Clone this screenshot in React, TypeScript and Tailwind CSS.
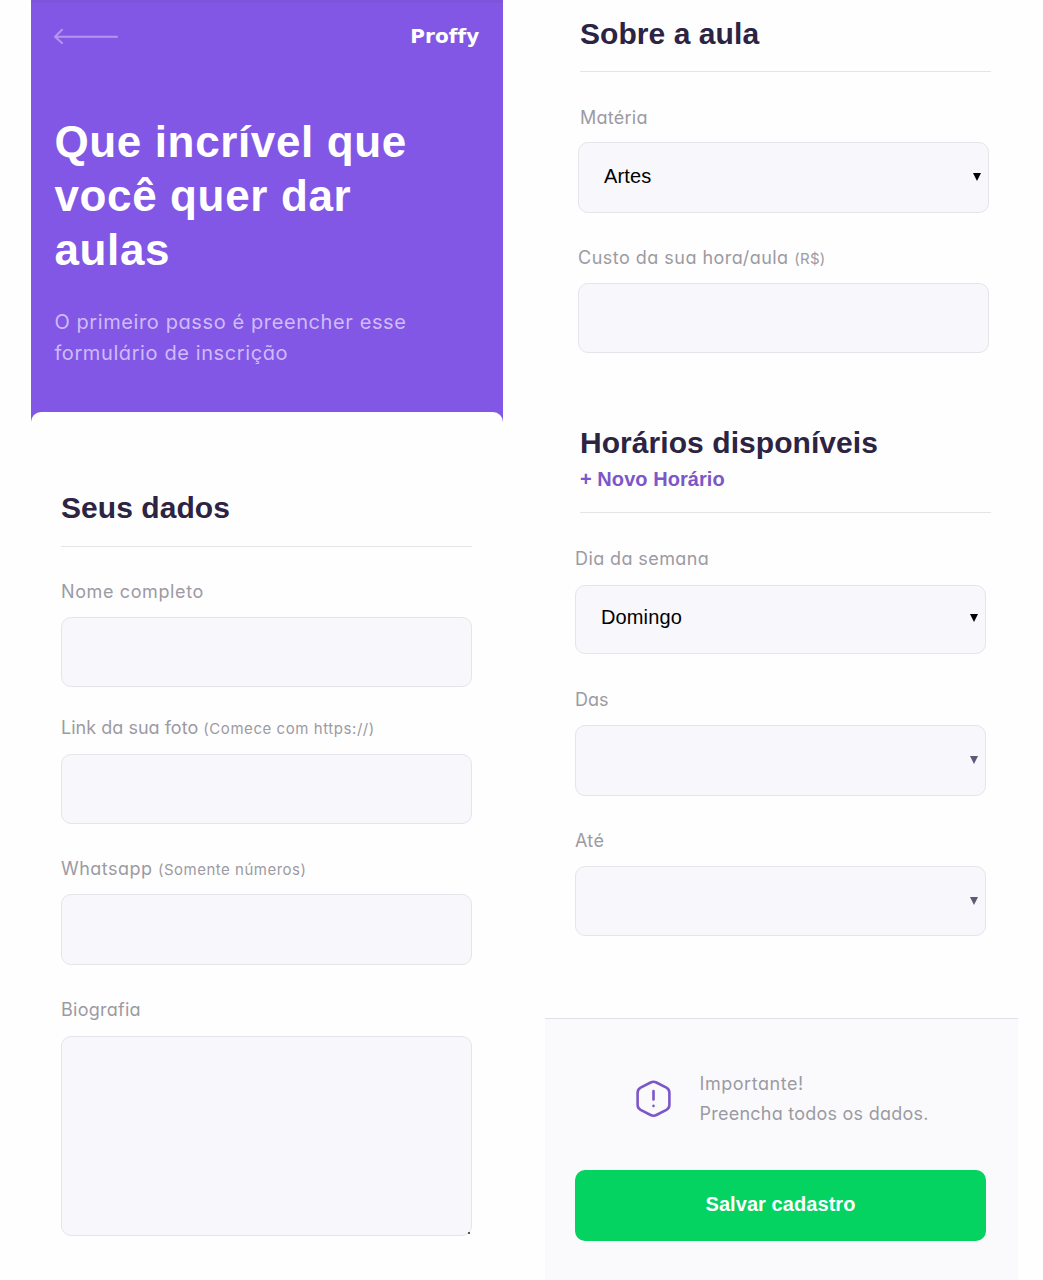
import type { ReactNode } from 'react';

const box =
  'block w-[411px] rounded-[10px] border border-[#e4e4ea] bg-[#f7f7fc] outline-none';

function Label({ className, children }: { className: string; children: ReactNode }) {
  return (
    <div
      className={`flex h-7 items-baseline whitespace-pre font-['Inter',sans-serif] text-[18px] leading-7 font-normal text-[#9c9aa3] [font-feature-settings:'cv11'] ${className}`}
    >
      {children}
    </div>
  );
}

function Hint({ className, children }: { className: string; children: ReactNode }) {
  return <span className={`text-[15px] ${className}`}>{children}</span>;
}

function Heading({ children }: { children: ReactNode }) {
  return <h2 className="h-9 text-[30px] leading-9 font-bold tracking-[0.06px] text-[#2d2342]">{children}</h2>;
}

function Select({ value, className, arrow = 'text-black' }: { value?: string; className: string; arrow?: string }) {
  return (
    <div className={`${box} flex items-start justify-between pr-[7px] pl-[25px] ${className}`}>
      <span className="text-[20px] leading-7 tracking-[0.12px] text-black">{value}</span>
      <svg className={`mt-[11px] ${arrow}`} width="8" height="8" viewBox="0 0 8 8" fill="currentColor">
        <path d="M0 0H8L4 8Z" />
      </svg>
    </div>
  );
}

function TeacherIntro() {
  return (
    <section className="ml-[31px] w-[471.5px] shrink-0 bg-[#8257e5]">
      <header className="h-[412px] border-t-[3px] border-[#7f54dc] pr-[23px] pl-[23.4px]">
        <div className="flex h-[65px] items-center justify-between">
          <svg width="64" height="16" viewBox="0 0 64 16" fill="none" stroke="#b595f2" strokeWidth="2" strokeLinecap="round" strokeLinejoin="round">
            <path d="M1 8.8H63M8 1.8L1 8.8L8 15" />
          </svg>
          <span className="font-['DejaVu_Sans',sans-serif] text-[20px] leading-7 font-bold tracking-[0.1px] text-white">Proffy</span>
        </div>
        <h1 className="mt-[47px] text-[44px] leading-[54px] font-bold tracking-[0.64px] text-white">
          Que incrível que
          <br />
          você quer dar
          <br />
          aulas
        </h1>
        <p className="mt-[30px] font-['Inter',sans-serif] text-[20px] leading-[31px] font-normal tracking-[0.6px] whitespace-nowrap text-[#d0bbfa] [font-feature-settings:'cv11']">
          O primeiro passo é preencher esse
          <br />
          formulário de inscrição
        </p>
      </header>
      <div className="h-[868px] rounded-t-[10px] bg-[#fefefe] pt-[78px] pl-[30px]">
        <div className="w-[411px] border-b border-[#e4e4e9] pb-5">
          <Heading>Seus dados</Heading>
        </div>
        <Label className="mt-[31px] tracking-[0.62px]">Nome completo</Label>
        <input className={`${box} mt-[11px] h-[70px]`} />
        <Label className="mt-[27px]">
          <span className="tracking-[0.02px]">Link da sua foto </span>
          <Hint className="tracking-[0.56px]">(Comece com https://)</Hint>
        </Label>
        <input className={`${box} mt-[12px] h-[70px]`} />
        <Label className="mt-[31px]">
          <span className="tracking-[0.47px]">Whatsapp </span>
          <Hint className="tracking-[0.5px]">(Somente números)</Hint>
        </Label>
        <input className={`${box} mt-[11px] h-[71px]`} />
        <Label className="mt-[31px] tracking-[0.25px]">Biografia</Label>
        <div className="relative mt-[12px] w-[411px]">
          <textarea className={`${box} h-[200px] resize-none`} />
          <span className="absolute right-[2px] bottom-[2px] size-[2px] bg-[#55555c]" />
        </div>
      </div>
    </section>
  );
}

function ClassForm() {
  return (
    <section className="ml-[42px] flex w-[473px] shrink-0 flex-col">
      <div className="pt-[16px] pl-[33.5px]">
        <div className="ml-[2px] w-[411px] border-b border-[#e4e4e9] pb-[19px]">
          <Heading>Sobre a aula</Heading>
        </div>
        <Label className="mt-[32px] ml-[2px] tracking-[0.25px]">Matéria</Label>
        <Select value="Artes" className="mt-[10px] h-[71px] pt-[19px]" />
        <Label className="mt-[31px]">
          <span className="tracking-[0.48px]">Custo da sua hora/aula </span>
          <Hint className="tracking-[0.3px]">(R$)</Hint>
        </Label>
        <input className={`${box} mt-[11px] h-[70px]`} />
      </div>

      <div className="mt-[72px] ml-[35.5px] w-[411px] border-b border-[#e4e4e9] pb-[19px]">
        <Heading>Horários disponíveis</Heading>
        <button className="mt-[4px] block h-7 text-[20px] leading-7 font-bold tracking-[0.06px] text-[#7b57c9]">
          + Novo Horário
        </button>
      </div>

      <div className="pl-[30.5px]">
        <Label className="mt-[32px] tracking-[0.4px]">Dia da semana</Label>
        <Select value="Domingo" className="mt-[12px] h-[69px] pt-[17px]" />
        <Label className="mt-[32px]">Das</Label>
        <Select className="mt-[11px] h-[71px] pt-[19px]" arrow="text-[#5f5878]" />
        <Label className="mt-[31px] tracking-[0.3px]">Até</Label>
        <Select className="mt-[11px] h-[70px] pt-[19px]" arrow="text-[#5f5878]" />
      </div>

      <footer className="mt-[82px] h-[262px] border-t border-[#dfe0e7] bg-[#fafafc] pl-[30.5px]">
        <div className="mt-[49px] flex h-[61px] items-center pl-[60.5px]">
          <svg width="35" height="37" viewBox="0 0 35 37" fill="none" stroke="#7b57c9" strokeWidth="2.6" strokeLinecap="round" strokeLinejoin="round">
            <path d="M14.6 2.5Q17.5 1 20.4 2.5L30.4 7.6Q33.4 9.3 33.4 12.7V24.8Q33.4 28.2 30.4 29.9L20.4 35Q17.5 36.4 14.6 35L4.6 29.9Q1.6 28.2 1.6 24.8V12.7Q1.6 9.3 4.6 7.6Z" />
            <path d="M17.5 11V19.5M17.5 25.9V26" />
          </svg>
          <p className="ml-[29px] font-['Inter',sans-serif] text-[18px] leading-[30px] font-normal whitespace-nowrap text-[#9c9aa3] [font-feature-settings:'cv11']">
            <span className="tracking-[0.55px]">Importante!</span>
            <br />
            <span className="tracking-[0.24px]">Preencha todos os dados.</span>
          </p>
        </div>
        <button className="mt-[41px] block h-[71px] w-[411px] rounded-[10px] bg-[#04d361] pb-[4px] text-[20px] font-bold tracking-[0.07px] text-white">
          Salvar cadastro
        </button>
      </footer>
    </section>
  );
}

export default function App() {
  return (
    <main className="flex h-[1280px] w-[1043px] overflow-hidden bg-[#fefefe] font-['Liberation_Sans',Arial,sans-serif]">
      <TeacherIntro />
      <ClassForm />
    </main>
  );
}
